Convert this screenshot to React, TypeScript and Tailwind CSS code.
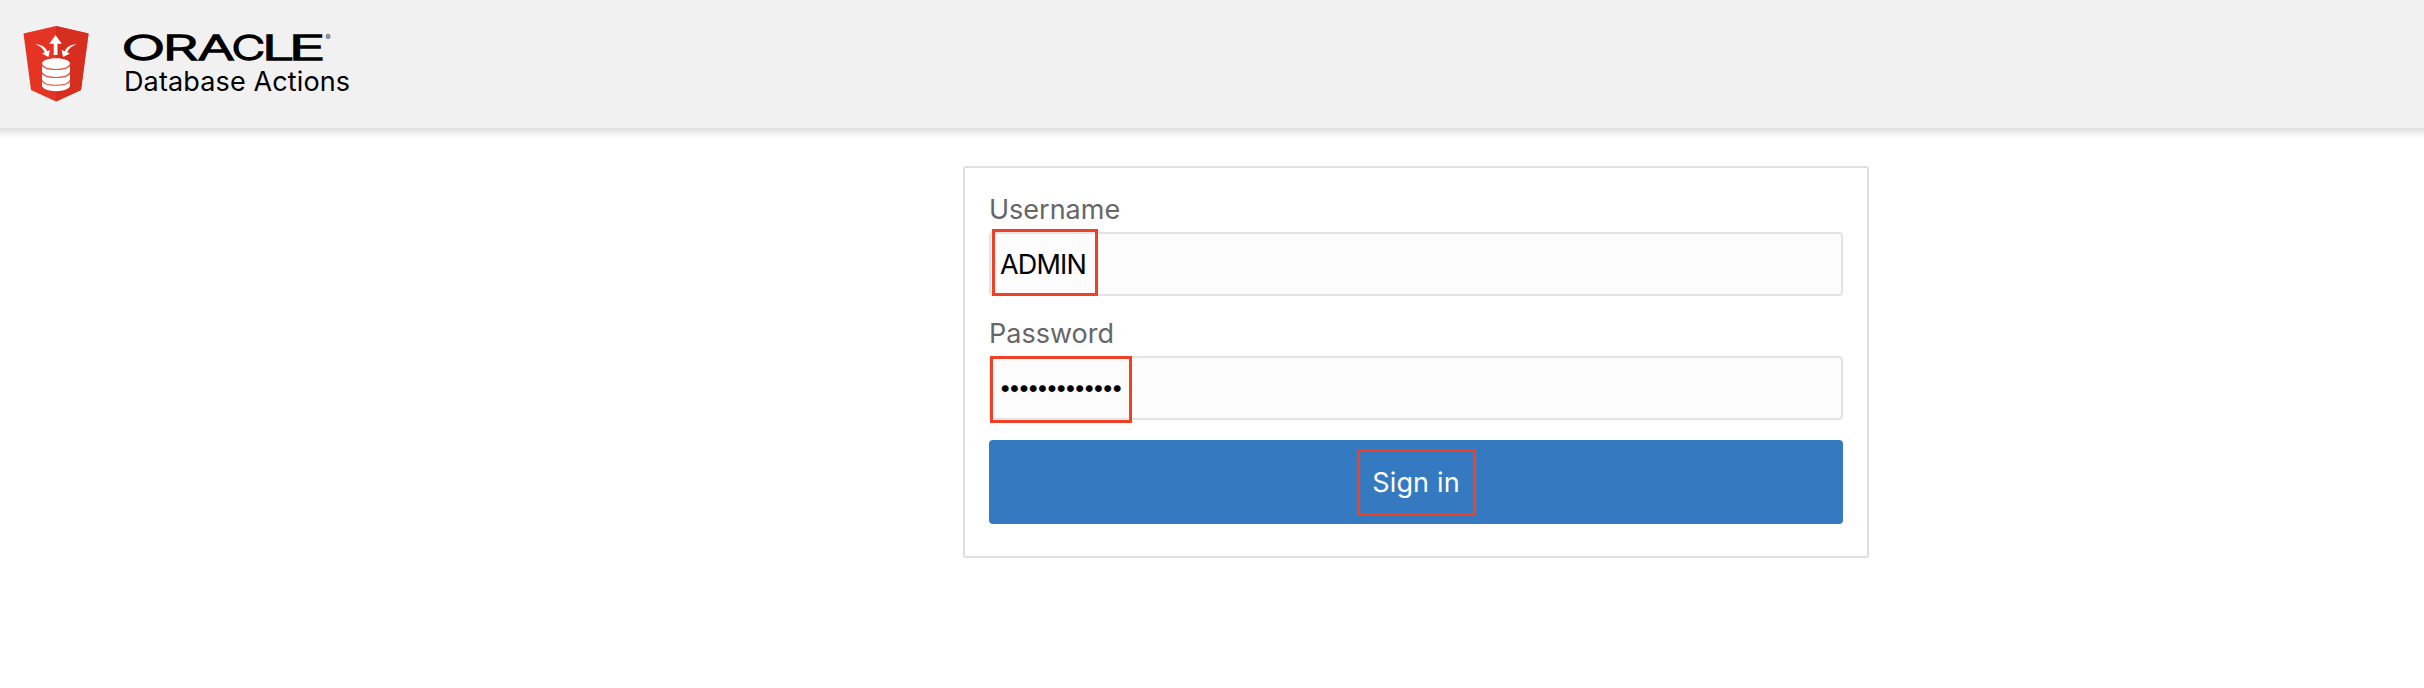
import React from "react";

function DatabaseBadge() {
  return (
    <svg className="h-[78px] w-[68px] shrink-0" viewBox="0 0 68 78" aria-hidden="true">
      <path d="M1.5 8.500 34 1l32.500 7.500-7.500 56.500L34 76.500 9 65Z" fill="#e53423" />
      <path d="M34 1l32.500 7.500-7.500 56.500L34 76.500Z" fill="#d62e1f" />
      <path d="M33.500 10l6.300 8.800h-4.300V30h-3.800V18.800h-4.400Z" fill="#fff" />
      <path d="M13 19.200c6.500.2 10.500 2.800 12.300 7l2.700-1.200-1.600 7-6.400-3.400 2.800-1.300c-2-4-5-6.700-9.800-8.100Z" fill="#fff" />
      <path d="M55 19.200c-6.500.2-10.500 2.800-12.300 7L39.500 25l1.600 7 6.900-3.400-2.900-1.300c2-4 5-6.700 9.900-8.100Z" fill="#fff" />
      <path d="M20 38.500v22c0 3.200 6.300 5.700 14 5.700s14-2.500 14-5.700v-22c0-3-6.300-5.300-14-5.300s-14 2.300-14 5.300Z" fill="#fff" />
      <g fill="none" stroke="#e0402f" strokeWidth="1.100">
        <path d="M20 39.500c1 3.100 7 5 14 5s13-1.900 14-5" />
        <path d="M20 47.500c1 3.100 7 5 14 5s13-1.900 14-5" />
        <path d="M20 55.300c1 3.100 7 5 14 5s13-1.900 14-5" />
      </g>
    </svg>
  );
}

const LETTERS = [
  { char: "O", x: -2.5, stretch: 1.7 },
  { char: "R", x: 38.8, stretch: 1.65 },
  { char: "A", x: 73.8, stretch: 1.61 },
  { char: "C", x: 107.5, stretch: 1.36 },
  { char: "L", x: 138, stretch: 1.68 },
  { char: "E", x: 164.5, stretch: 1.83 },
];

function Wordmark() {
  return (
    <svg className="block h-[30px] w-[212px] overflow-visible" viewBox="0 0 212 30">
      {LETTERS.map(({ char, x, stretch }) => (
        <text
          key={char}
          transform={`translate(${x} 27.600) scale(${stretch} 1)`}
          fontSize="34"
          fontWeight="300"
          stroke="#000"
          strokeWidth="1.400"
          className="font-['Inter',sans-serif]"
        >
          {char}
        </text>
      ))}
      <text x="201.500" y="7.500" fontSize="7.500" className="font-['Inter',sans-serif]">®</text>
    </svg>
  );
}

function Highlight({ className }: { className: string }) {
  return <span className={`pointer-events-none absolute border-[3px] border-[#ee4126] ${className}`} />;
}

function Field({ label, children }: { label: string; children: React.ReactNode }) {
  return (
    <div>
      <div className="h-[40px] text-[27px] leading-[35px] text-[#666]">{label}</div>
      <div className="relative flex h-16 items-center rounded-[4px] border-2 border-[#e4e4e4] bg-[#fcfcfc] px-[9px]">
        {children}
      </div>
    </div>
  );
}

export default function App() {
  return (
    <div className="min-h-[688px] bg-white font-['Inter',sans-serif] text-black">
      <header className="flex h-32 items-start bg-[#f1f1f1] pl-[22px] pt-[25px]">
        <DatabaseBadge />
        <div className="ml-[34px] pt-[7px]">
          <Wordmark />
          <div className="mt-[2px] text-[27px] leading-[36px] tracking-[0.13px]">Database Actions</div>
        </div>
      </header>
      <div className="h-[10px] bg-linear-to-b from-[#dfdfdf] to-white" />
      <main className="ml-[963px] mt-[28px] h-[392px] w-[906px] rounded-[2px] border-2 border-[#e0e0e0] px-6 pt-6">
        <Field label="Username">
          <span className="pt-[2px] text-[27px] tracking-[-0.8px]">ADMIN</span>
          <Highlight className="left-px top-[-5px] h-[67px] w-[106px]" />
        </Field>
        <div className="h-5" />
        <Field label="Password">
          <span className="-ml-px -mt-px text-[22px] tracking-[-3.050px]">•••••••••••••</span>
          <Highlight className="left-[-1px] top-[-2px] h-[67px] w-[142px]" />
        </Field>
        <button className="relative mt-5 flex h-[84px] w-full items-center justify-center rounded-[4px] bg-[#3579c0] pt-[2px] text-[27px] tracking-[0.15px] text-white">
          Sign in
          <Highlight className="left-[368px] top-[9px] h-[67px] w-[119px]" />
        </button>
      </main>
    </div>
  );
}
